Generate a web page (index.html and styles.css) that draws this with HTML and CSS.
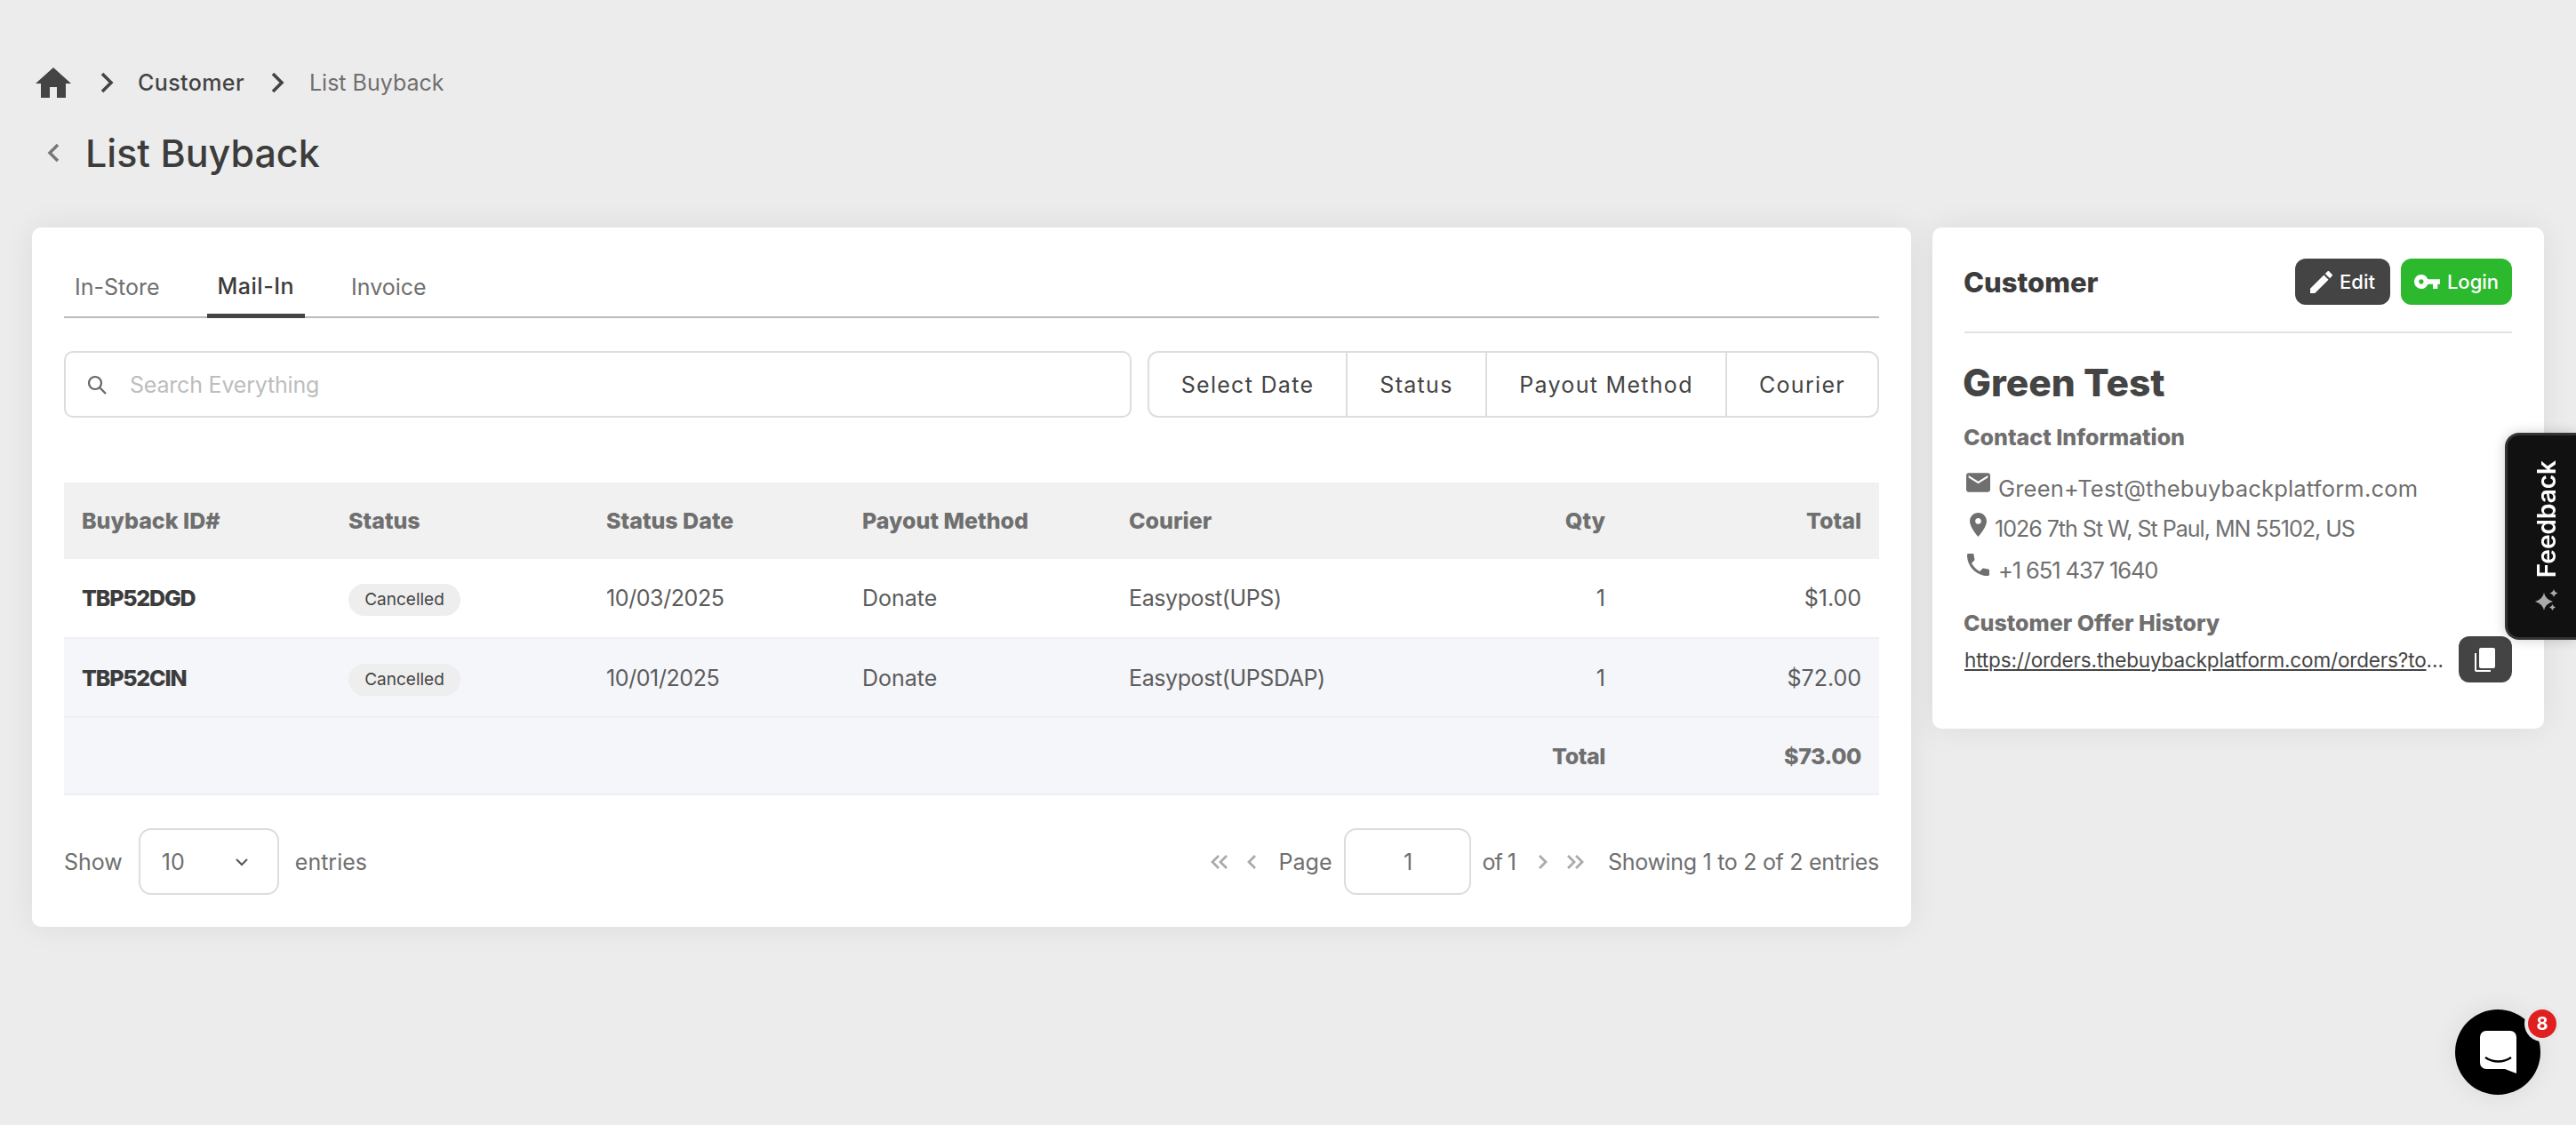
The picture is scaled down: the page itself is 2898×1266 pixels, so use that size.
FILE: index.html
```html
<!DOCTYPE html>
<html lang="en">
<head>
    <meta charset="UTF-8">
    <meta name="viewport" content="width=device-width, initial-scale=1.0">
    <title>List Buyback</title>
    <link rel="stylesheet" href="styles.css">
</head>
<body>
    <nav class="breadcrumb">
        <svg class="home-icon" viewBox="2 3 20 17"><path d="M10 20v-6h4v6h5v-8h3L12 3 2 12h3v8z"/></svg>
        <svg class="crumb-sep" viewBox="0 0 16 26"><path d="M3 3l10 10L3 23"/></svg>
        <span class="crumb-link">Customer</span>
        <svg class="crumb-sep" viewBox="0 0 16 26"><path d="M3 3l10 10L3 23"/></svg>
        <span class="crumb-current">List Buyback</span>
    </nav>

    <header class="page-title">
        <svg class="back-icon" viewBox="0 0 16 24"><path d="M13 3L4 12l9 9"/></svg>
        <h1>List Buyback</h1>
    </header>

    <main class="columns">
        <section class="card list-card">
            <div class="tabs">
                <span class="tab">In-Store</span>
                <span class="tab active">Mail-In</span>
                <span class="tab">Invoice</span>
            </div>

            <div class="toolbar">
                <div class="search">
                    <svg class="search-icon" viewBox="0 0 24 24"><circle cx="10" cy="10" r="7"/><path d="M15 15l7 7"/></svg>
                    <span>Search Everything</span>
                </div>
                <div class="filters">
                    <span class="filter filter-date">Select Date</span>
                    <span class="filter filter-status">Status</span>
                    <span class="filter filter-payout">Payout Method</span>
                    <span class="filter filter-courier">Courier</span>
                </div>
            </div>

            <table class="buyback-table">
                <colgroup>
                    <col class="col-id"><col class="col-status"><col class="col-date"><col class="col-payout"><col class="col-courier"><col class="col-qty"><col class="col-total">
                </colgroup>
                <thead>
                    <tr>
                        <th>Buyback ID#</th>
                        <th>Status</th>
                        <th>Status Date</th>
                        <th>Payout Method</th>
                        <th>Courier</th>
                        <th class="num">Qty</th>
                        <th class="num">Total</th>
                    </tr>
                </thead>
                <tbody>
                    <tr>
                        <td class="id">TBP52DGD</td>
                        <td><span class="badge">Cancelled</span></td>
                        <td class="tight">10/03/2025</td>
                        <td>Donate</td>
                        <td class="tight">Easypost(UPS)</td>
                        <td class="num">1</td>
                        <td class="num">$1.00</td>
                    </tr>
                    <tr class="shaded">
                        <td class="id">TBP52CIN</td>
                        <td><span class="badge">Cancelled</span></td>
                        <td class="tight">10/01/2025</td>
                        <td>Donate</td>
                        <td class="tight">Easypost(UPSDAP)</td>
                        <td class="num">1</td>
                        <td class="num">$72.00</td>
                    </tr>
                    <tr class="shaded total-row">
                        <td colspan="5"></td>
                        <td class="num">Total</td>
                        <td class="num">$73.00</td>
                    </tr>
                </tbody>
            </table>

            <div class="table-footer">
                <div class="page-size">
                    <span>Show</span>
                    <div class="select-box">
                        <span>10</span>
                        <svg class="select-arrow" viewBox="0 0 16 10"><path d="M2 2l6 6 6-6"/></svg>
                    </div>
                    <span>entries</span>
                </div>
                <div class="pager">
                    <svg class="pager-double" viewBox="0 0 24 18"><path d="M11 2L4 9l7 7M20 2l-7 7 7 7"/></svg>
                    <svg class="pager-single" viewBox="0 0 12 18"><path d="M10 2L3 9l7 7"/></svg>
                    <span class="page-word">Page</span>
                    <div class="page-input">1</div>
                    <span class="page-of">of 1</span>
                    <svg class="pager-single next" viewBox="0 0 12 18"><path d="M2 2l7 7-7 7"/></svg>
                    <svg class="pager-double" viewBox="0 0 24 18"><path d="M4 2l7 7-7 7M13 2l7 7-7 7"/></svg>
                    <span class="page-info">Showing 1 to 2 of 2 entries</span>
                </div>
            </div>
        </section>

        <aside class="card customer-card">
            <div class="customer-head">
                <h2>Customer</h2>
                <div class="customer-actions">
                    <button class="btn btn-dark">
                        <svg viewBox="3 3 18 18"><path d="M3 17.25V21h3.75L17.81 9.94l-3.75-3.75L3 17.25zM20.71 7.04c.39-.39.39-1.02 0-1.41l-2.34-2.34c-.39-.39-1.02-.39-1.41 0l-1.83 1.83 3.75 3.75 1.83-1.83z"/></svg>
                        Edit
                    </button>
                    <button class="btn btn-green">
                        <svg class="key" viewBox="1 6 22 12"><path d="M12.65 10C11.83 7.67 9.61 6 7 6c-3.31 0-6 2.69-6 6s2.69 6 6 6c2.61 0 4.83-1.67 5.65-4H17v4h4v-4h2v-4H12.65zM7 14c-1.1 0-2-.9-2-2s.9-2 2-2 2 .9 2 2-.9 2-2 2z"/></svg>
                        Login
                    </button>
                </div>
            </div>

            <h3 class="customer-name">Green Test</h3>
            <h4 class="customer-label">Contact Information</h4>
            <ul class="contact-list">
                <li>
                    <svg class="contact-mail" viewBox="2 4 20 16"><path d="M20 4H4c-1.1 0-1.99.9-1.99 2L2 18c0 1.1.9 2 2 2h16c1.1 0 2-.9 2-2V6c0-1.1-.9-2-2-2zm0 4l-8 5-8-5V6l8 5 8-5v2z"/></svg>
                    <span>Green+Test@thebuybackplatform.com</span>
                </li>
                <li class="contact-place">
                    <svg viewBox="5 2 14 20"><path d="M12 2C8.13 2 5 5.13 5 9c0 5.25 7 13 7 13s7-7.75 7-13c0-3.87-3.13-7-7-7zm0 9.5c-1.38 0-2.5-1.12-2.5-2.5s1.12-2.5 2.5-2.5 2.5 1.12 2.5 2.5-1.12 2.5-2.5 2.5z"/></svg>
                    <span>1026 7th St W, St Paul, MN 55102, US</span>
                </li>
                <li class="contact-tel">
                    <svg class="contact-phone" viewBox="3 3 18 18"><path d="M6.62 10.79c1.44 2.83 3.76 5.14 6.59 6.59l2.2-2.2c.27-.27.67-.36 1.02-.24 1.12.37 2.33.57 3.57.57.55 0 1 .45 1 1V20c0 .55-.45 1-1 1-9.39 0-17-7.61-17-17 0-.55.45-1 1-1h3.5c.55 0 1 .45 1 1 0 1.25.2 2.45.57 3.57.11.35.03.74-.25 1.02l-2.2 2.2z"/></svg>
                    <span>+1 651 437 1640</span>
                </li>
            </ul>
            <h4 class="customer-label offer-label">Customer Offer History</h4>
            <div class="offer-row">
                <a class="offer-link" href="#">https://orders.thebuybackplatform.com/orders?token=8f2a91c7d3</a>
                <button class="copy-btn">
                    <svg viewBox="0 0 24 27"><path d="M7 0h14a2 2 0 0 1 2 2v19a2 2 0 0 1-2 2H7a2 2 0 0 1-2-2V2a2 2 0 0 1 2-2z"/><path d="M0 6h2v19h16v2H2a2 2 0 0 1-2-2z"/></svg>
                </button>
            </div>
        </aside>
    </main>

    <button class="feedback-tab">
        <span>Feedback</span>
        <svg viewBox="0 0 27 26"><path d="M11 4q1.500 7.500 10 10-8.500 2.500-10 10-1.500-7.500-10-10 8.500-2.500 10-10z"/><path d="M22 0q.8 3.200 4.500 4.500-3.700 1.300-4.500 4.500-.8-3.200-4.500-4.500 3.700-1.300 4.500-4.500z"/><path d="M20.500 17q.6 2.700 3.500 3.500-2.900.8-3.500 3.500-.6-2.700-3.500-3.500 2.900-.8 3.500-3.500z"/></svg>
    </button>

    <div class="chat-launcher">
        <svg viewBox="0 0 41 48"><path d="M7 0h27a7 7 0 0 1 7 7v41l-13-5H7a7 7 0 0 1-7-7V7a7 7 0 0 1 7-7z"/><path class="smile" d="M6 30c9 6 20 6 29 0"/></svg>
        <span class="chat-count">8</span>
    </div>
</body>
</html>
```

FILE: styles.css
```css
* {
    box-sizing: border-box;
}
body {
    margin: 0;
    height: 1266px;
    overflow: hidden;
    padding: 76px 36px 0;
    background: #ececec;
    color: #444;
    font-family: Inter, 'Open Sans', sans-serif;
    font-size: 25px;
}
svg {
    display: block;
    flex: none;
}

/* breadcrumb */
.breadcrumb {
    display: flex;
    align-items: center;
    height: 34px;
    padding-left: 4px;
    font-size: 25px;
}
.home-icon {
    width: 40px;
    height: 34px;
    fill: #444;
}
.crumb-sep {
    width: 16px;
    height: 26px;
    margin: 0 27px 0 32px;
    fill: none;
    stroke: #444;
    stroke-width: 3.6;
}
.crumb-link {
    font-weight: 500;
    letter-spacing: 0.4px;
}
.crumb-link + .crumb-sep {
    margin: 0 28px 0 29px;
}
.crumb-current {
    color: #6f6f6f;
}

/* title */
.page-title {
    display: flex;
    align-items: center;
    gap: 28px;
    height: 52px;
    margin-top: 36px;
    padding-left: 16px;
}
.back-icon {
    width: 16px;
    height: 24px;
    fill: none;
    stroke: #777;
    stroke-width: 3.4;
}
h1 {
    margin: 0;
    font-size: 43px;
    font-weight: 500;
    color: #3c3c3c;
}

/* cards */
.columns {
    display: flex;
    align-items: flex-start;
    gap: 24px;
    margin-top: 58px;
}
.card {
    background: #fff;
    border-radius: 10px;
    box-shadow: 0 0 36px rgba(0,0,0,0.07);
}
.list-card {
    width: 2114px;
    height: 787px;
    padding: 36px;
}

/* tabs */
.tabs {
    display: flex;
    gap: 41px;
    height: 66px;
    border-bottom: 2px solid #bbb;
}
.tab {
    height: 66px;
    padding: 16px 12px 0;
    color: #6f6f6f;
    font-size: 25px;
    white-space: nowrap;
}
.tab.active {
    margin-right: -1px;
    padding-top: 15px;
    color: #3c3c3c;
    font-weight: 500;
    letter-spacing: 0.5px;
    border-bottom: 5px solid #444;
}

/* search and filters */
.toolbar {
    display: flex;
    gap: 18px;
    margin-top: 37px;
}
.search {
    display: flex;
    align-items: center;
    gap: 25px;
    width: 1201px;
    height: 75px;
    padding-left: 23px;
    border: 2px solid #ddd;
    border-radius: 10px;
    color: #bdbdbd;
    letter-spacing: -0.2px;
}
.search-icon {
    width: 24px;
    height: 24px;
    fill: none;
    stroke: #666;
    stroke-width: 2.2;
}
.filters {
    display: flex;
    flex: 1;
    height: 75px;
    border: 2px solid #ddd;
    border-radius: 12px;
}
.filter {
    display: flex;
    align-items: center;
    justify-content: center;
    border-right: 2px solid #ddd;
    color: #444;
    letter-spacing: 1.3px;
}
.filter:last-child { border-right: 0; }
.filter-date { width: 223px; }
.filter-status { width: 157px; }
.filter-payout { width: 270px; }
.filter-courier { flex: 1; }

/* table */
.buyback-table {
    width: 2042px;
    margin-top: 73px;
    border-collapse: collapse;
    table-layout: fixed;
    font-size: 25px;
}
.col-id { width: 300px; }
.col-status { width: 290px; }
.col-date { width: 288px; }
.col-payout { width: 300px; }
.col-courier { width: 400px; }
.col-qty { width: 176px; }
.col-total { width: 288px; }
th, td {
    padding: 0 20px;
    text-align: left;
    white-space: nowrap;
}
th {
    height: 86px;
    background: #f1f1f1;
    color: #6f6f6f;
    font-weight: 800;
}
td {
    height: 89px;
    border-bottom: 2px solid #eef0f6;
    color: #5c5c5c;
}
.shaded td { background: #f5f6fa; }
.id {
    font-weight: 800;
    color: #3c3c3c;
    letter-spacing: -1.2px;
}
.tight { letter-spacing: -0.4px; }
th.num, td.num { text-align: right; }
.total-row td {
    height: 87px;
    font-weight: 800;
    color: #6f6f6f;
    letter-spacing: -0.4px;
}
.badge {
    display: inline-block;
    width: 126px;
    height: 36px;
    line-height: 36px;
    margin-top: 4px;
    text-align: center;
    border-radius: 18px;
    background: #eee;
    color: #444;
    font-size: 19px;
}

/* footer */
.table-footer {
    display: flex;
    justify-content: space-between;
    align-items: center;
    margin-top: 37px;
    color: #6f6f6f;
}
.page-size {
    display: flex;
    align-items: center;
    gap: 18px;
}
.select-box {
    display: flex;
    align-items: center;
    justify-content: space-between;
    width: 158px;
    height: 75px;
    padding: 0 32px 0 24px;
    border: 2px solid #ddd;
    border-radius: 14px;
}
.select-arrow {
    width: 16px;
    height: 10px;
    fill: none;
    stroke: #555;
    stroke-width: 2;
}
.pager {
    display: flex;
    align-items: center;
}
.pager-double, .pager-single {
    fill: none;
    stroke: #aaa;
    stroke-width: 2.8;
    height: 18px;
}
.pager-double { width: 24px; }
.pager-single { width: 12px; margin: 0 25px 0 18px; }
.pager-single.next { margin: 0 18px 0 25px; }
.page-word { margin-right: 14px; }
.page-input {
    display: flex;
    align-items: center;
    justify-content: center;
    width: 143px;
    height: 75px;
    border: 2px solid #ddd;
    border-radius: 14px;
}
.page-of {
    margin-left: 12px;
    letter-spacing: -1px;
}
.page-info {
    margin-left: 25px;
    letter-spacing: -0.3px;
}

/* customer card */
.customer-card {
    width: 688px;
    height: 564px;
    padding: 36px;
}
.customer-head {
    display: flex;
    justify-content: space-between;
    align-items: center;
    height: 83px;
    padding-bottom: 31px;
    border-bottom: 2px solid #e2e2e2;
}
h2 {
    margin: 0 0 0 -1px;
    font-size: 31px;
    font-weight: 800;
    color: #3c3c3c;
}
.customer-actions {
    display: flex;
    gap: 12px;
}
.btn {
    display: flex;
    align-items: center;
    justify-content: center;
    gap: 8px;
    height: 52px;
    border: 0;
    border-radius: 12px;
    color: #fff;
    font-family: inherit;
    font-size: 22px;
    font-weight: 500;
}
.btn svg {
    width: 25px;
    height: 25px;
    fill: #fff;
}
.btn svg.key {
    width: 29px;
    height: 16px;
}
.btn-dark {
    width: 107px;
    background: #444;
}
.btn-green {
    width: 125px;
    background: #2db92d;
}
.customer-name {
    margin: 30px 0 0 -2px;
    height: 52px;
    line-height: 52px;
    font-size: 42.5px;
    font-weight: 800;
    color: #444;
}
.customer-label {
    margin: 0 0 0 -1px;
    font-size: 25px;
    font-weight: 800;
    color: #6f6f6f;
}
.customer-name + .customer-label {
    margin-top: 20px;
}
.contact-list {
    margin: 24px 0 0;
    padding: 0;
    list-style: none;
    color: #6f6f6f;
    font-size: 25.5px;
    letter-spacing: 0.2px;
}
.contact-list li {
    display: flex;
    align-items: flex-start;
    gap: 9px;
    height: 46px;
    white-space: nowrap;
}
.contact-list span {
    margin-top: 3px;
}
.contact-list svg {
    fill: #6f6f6f;
}
.contact-mail {
    width: 27px;
    height: 22px;
    margin: 1px 0 0 2px;
}
.contact-place svg {
    width: 19px;
    height: 27px;
    margin: 0 0 0 6px;
}
.contact-place {
    gap: 5px;
    font-size: 25px;
    letter-spacing: -1px;
}
.contact-tel { letter-spacing: -1.1px; }
.contact-phone {
    width: 25px;
    height: 25px;
    margin: 0 1px 0 3px;
}
.offer-label {
    margin-top: 17px;
}
.offer-row {
    display: flex;
    align-items: center;
    justify-content: space-between;
    margin-top: 0;
}
.offer-link {
    width: 540px;
    overflow: hidden;
    text-overflow: ellipsis;
    white-space: nowrap;
    color: #444;
    font-size: 22.5px;
    letter-spacing: -0.15px;
}
.copy-btn {
    display: flex;
    align-items: center;
    justify-content: center;
    width: 60px;
    height: 52px;
    padding: 0;
    border: 0;
    border-radius: 12px;
    background: #444;
}
.copy-btn svg {
    width: 24px;
    height: 27px;
    fill: #fff;
}

/* floating widgets */
.feedback-tab {
    position: fixed;
    right: 0;
    top: 487px;
    display: flex;
    flex-direction: column;
    align-items: center;
    justify-content: center;
    gap: 13px;
    width: 80px;
    height: 233px;
    padding: 0 0 0 10px;
    border: 3px solid #333;
    border-right: 0;
    border-radius: 16px 0 0 16px;
    background: #111;
    box-shadow: 0 0 14px rgba(0,0,0,0.2);
}
.feedback-tab span {
    writing-mode: vertical-rl;
    transform: rotate(180deg);
    color: #fff;
    font-family: Inter, sans-serif;
    font-size: 28px;
    font-weight: 600;
}
.feedback-tab svg {
    width: 27px;
    height: 26px;
    fill: #aaa;
}
.chat-launcher {
    position: fixed;
    left: 2762px;
    top: 1136px;
    display: flex;
    align-items: center;
    justify-content: center;
    width: 96px;
    height: 96px;
    border-radius: 50%;
    background: #000;
    box-shadow: 0 0 30px rgba(0,0,0,0.08);
}
.chat-launcher svg {
    width: 41px;
    height: 48px;
    fill: #fff;
}
.chat-launcher .smile {
    fill: none;
    stroke: #000;
    stroke-width: 2.4;
}
.chat-count {
    position: absolute;
    right: -18px;
    top: 0;
    width: 32px;
    height: 32px;
    line-height: 32px;
    text-align: center;
    border-radius: 50%;
    background: #e02020;
    box-shadow: 0 0 0 4px #e8e8e8;
    color: #fff;
    font-size: 20px;
    font-weight: 700;
}
```
